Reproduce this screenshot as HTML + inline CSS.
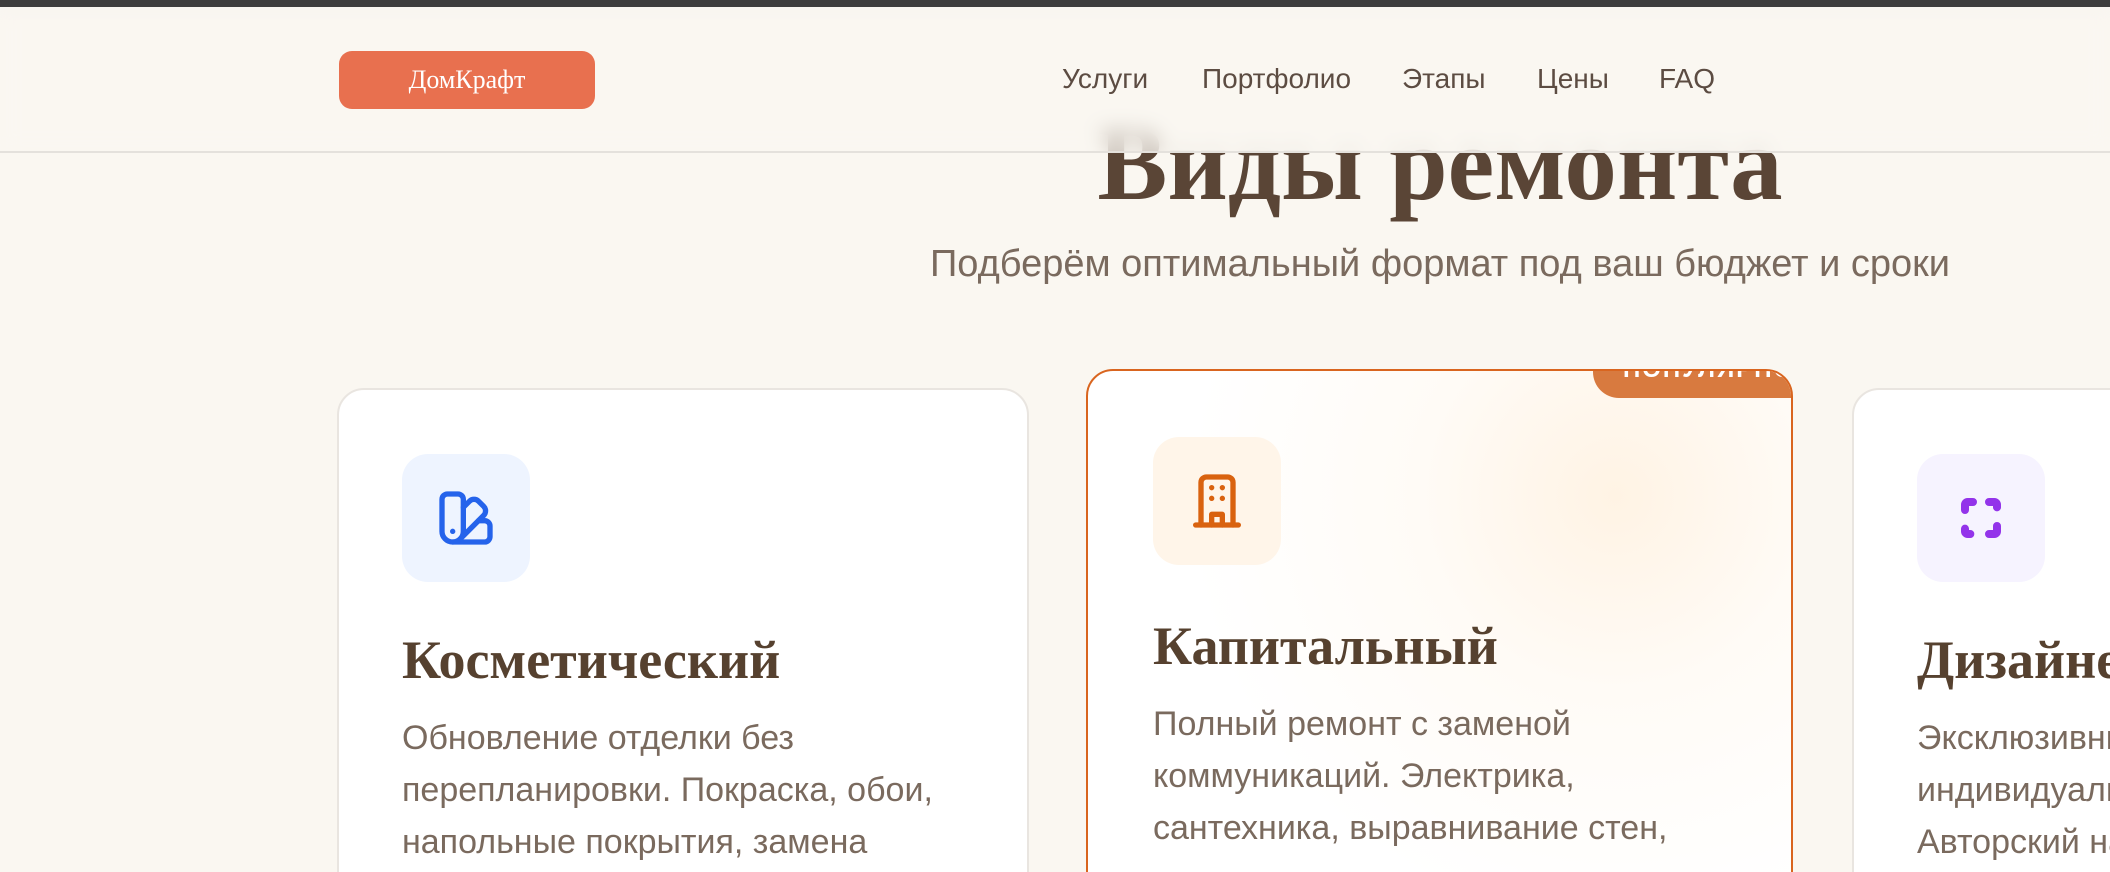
<!DOCTYPE html>
<html><head><meta charset="utf-8"><style>
*{margin:0;padding:0;box-sizing:border-box}
html,body{width:2110px;height:872px;overflow:hidden}
body{background:#faf7f1;position:relative;font-family:"Liberation Sans",sans-serif}
.top{position:absolute;left:0;top:0;width:2110px;height:7px;background:#3d3d3d;z-index:20}
.h1{position:absolute;left:0;width:2880px;top:111px;text-align:center;font:bold 105px/106px "Liberation Serif",serif;color:#5a4536;letter-spacing:0px}
.sub{position:absolute;left:0;width:2880px;top:242px;text-align:center;font-size:38px;line-height:44px;color:#7a6a5e}
.header{position:absolute;left:0;top:7px;width:2110px;height:146px;background:rgba(250,247,241,0.72);backdrop-filter:blur(10px);-webkit-backdrop-filter:blur(10px);border-bottom:2px solid #e4e1dc;z-index:10}
.logo{position:absolute;left:339px;top:44px;width:256px;height:58px;background:#e8704f;border-radius:13px;color:#fff;font:26px/58px "Liberation Serif",serif;text-align:center}
.nav{position:absolute;top:56px;font-size:28px;color:#5c4c42;line-height:32px}
.card{position:absolute;background:#fff;border:2px solid #e9e5e0;border-radius:27px;width:692px;height:700px;overflow:hidden}
.c2{border:2px solid #d9651f;background:radial-gradient(circle at 75% 18%,#fff3e4 0,#fffbf6 25%,#fff 55%)}
.ib{position:absolute;width:128px;height:128px;border-radius:26px;display:flex;align-items:center;justify-content:center}
.t{position:absolute;font:bold 54px/60px "Liberation Serif",serif;color:#56412f;white-space:nowrap}
.p{position:absolute;font-size:34px;line-height:52px;color:#7a6a5e;white-space:nowrap}
.badge{position:absolute;right:-2px;top:-2px;width:200px;height:29px;background:#d87a3f;border-bottom-left-radius:26px;overflow:hidden}
.badge span{position:absolute;left:30px;top:-13px;color:#fff;font:bold 24px/28px "Liberation Sans",sans-serif;letter-spacing:2px;white-space:nowrap}
</style></head><body>
<div class="top"></div>
<div class="h1">Виды ремонта</div>
<div class="sub">Подберём оптимальный формат под ваш бюджет и сроки</div>
<div class="header">
<div class="logo">ДомКрафт</div>
<div class="nav" style="left:1062px">Услуги</div>
<div class="nav" style="left:1202px">Портфолио</div>
<div class="nav" style="left:1402px">Этапы</div>
<div class="nav" style="left:1537px">Цены</div>
<div class="nav" style="left:1659px">FAQ</div>
</div>

<div class="card" style="left:337px;top:388px">
<div class="ib" style="left:63px;top:64px;background:#eef4ff">
<svg width="64" height="64" viewBox="0 0 24 24" fill="none" stroke="#2563eb" stroke-width="2" stroke-linecap="round" stroke-linejoin="round"><path d="M11 17a4 4 0 0 1-8 0V5a2 2 0 0 1 2-2h4a2 2 0 0 1 2 2Z"/><path d="M16.7 13H19a2 2 0 0 1 2 2v4a2 2 0 0 1-2 2H7"/><path d="M7 17h.01"/><path d="m11 8 2.3-2.3a2.4 2.4 0 0 1 3.404.004L18.6 7.6a2.4 2.4 0 0 1 .026 3.434L9.9 19.8"/></svg></div>
<div class="t" style="left:63px;top:240px">Косметический</div>
<div class="p" style="left:63px;top:322px">Обновление отделки без<br>перепланировки. Покраска, обои,<br>напольные покрытия, замена</div>
</div>

<div class="card c2" style="left:1086px;top:369px;width:707px">
<div class="badge"><span>ПОПУЛЯРНО</span></div>
<div class="ib" style="left:65px;top:66px;background:#fff5e9">
<svg width="64" height="64" viewBox="0 0 24 24" fill="none" stroke="#d9620f" stroke-width="2" stroke-linecap="round" stroke-linejoin="round"><path d="M6 21V5a2 2 0 0 1 2-2h8a2 2 0 0 1 2 2v16"/><path d="M4 21h16"/><path d="M10 21v-4h4v4"/><path d="M10 7h.01M14 7h.01M10 11h.01M14 11h.01"/></svg></div>
<div class="t" style="left:65px;top:245px">Капитальный</div>
<div class="p" style="left:65px;top:327px">Полный ремонт с заменой<br>коммуникаций. Электрика,<br>сантехника, выравнивание стен,</div>
</div>

<div class="card" style="left:1852px;top:388px">
<div class="ib" style="left:63px;top:64px;background:#f6f3ff">
<svg width="64" height="64" viewBox="0 0 24 24" fill="none" stroke="#9333ea" stroke-width="3" stroke-linecap="round" stroke-linejoin="round"><path d="M6 9V7a1 1 0 0 1 1-1h2"/><path d="M15 6h2a1 1 0 0 1 1 1v1"/><path d="M6 16v1a1 1 0 0 0 1 1h1"/><path d="M15 18h2a1 1 0 0 0 1-1v-2"/></svg></div>
<div class="t" style="left:63px;top:240px">Дизайнерский</div>
<div class="p" style="left:63px;top:322px">Эксклюзивный ремонт по<br>индивидуальному проекту.<br>Авторский надзор</div>
</div>
</body></html>
